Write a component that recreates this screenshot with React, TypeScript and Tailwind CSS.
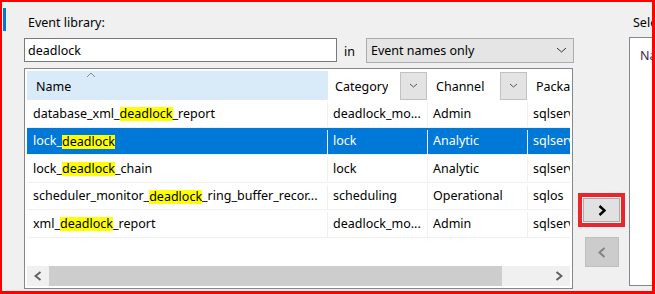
import React from "react";

type Row = {
  pre: string;
  post: string;
  category: string;
  channel: string;
  pkg: string;
  selected?: boolean;
};

const rows: Row[] = [
  { pre: "database_xml_", post: "_report", category: "deadlock_mo...", channel: "Admin", pkg: "sqlserver" },
  { pre: "lock_", post: "", category: "lock", channel: "Analytic", pkg: "sqlserver", selected: true },
  { pre: "lock_", post: "_chain", category: "lock", channel: "Analytic", pkg: "sqlserver" },
  { pre: "scheduler_monitor_", post: "_ring_buffer_recor...", category: "scheduling", channel: "Operational", pkg: "sqlos" },
  { pre: "xml_", post: "_report", category: "deadlock_mo...", channel: "Admin", pkg: "sqlserver" },
];

const Chevron = ({
  dir,
  className,
  w = 8,
  h = 10,
  sw = 1.6,
}: {
  dir: "left" | "right" | "down" | "up";
  className?: string;
  w?: number;
  h?: number;
  sw?: number;
}) => {
  const pts =
    dir === "left"
      ? `${w - 1.5},1 1.5,${h / 2} ${w - 1.5},${h - 1}`
      : dir === "right"
      ? `1.5,1 ${w - 1.5},${h / 2} 1.5,${h - 1}`
      : dir === "down"
      ? `1,1 ${w / 2},${h - 1} ${w - 1},1`
      : `1,${h - 1} ${w / 2},1 ${w - 1},${h - 1}`;
  return (
    <svg width={w} height={h} viewBox={`0 0 ${w} ${h}`} className={className}>
      <polyline points={pts} fill="none" stroke="currentColor" strokeWidth={sw} />
    </svg>
  );
};

const HeaderCell = ({ label, pl }: { label: string; pl: string }) => (
  <div className={`w-[100px] shrink-0 h-full flex items-center ${pl}`}>
    <span className="truncate pt-[3px]">{label}</span>
    <div className="ml-auto mr-[1px] w-[27px] h-[28px] bg-[#e3e3e3] border border-[#c2c2c2] flex items-center justify-center text-[#555]">
      <Chevron dir="down" w={9} h={5} sw={1} />
    </div>
  </div>
);

const App = () => {
  return (
    <div
      className="w-[655px] h-[294px] overflow-hidden bg-[#f0f0f0] border-t-2 border-l-2 border-r-[3px] border-b-[3px] border-[#ff0000] flex text-[12.5px] text-black"
      style={{ fontFamily: '"Noto Sans", "Open Sans", sans-serif' }}
    >
      {/* side tab marker */}
      <div className="w-[22px] shrink-0 pt-[6px] pl-[1px]">
        <div className="w-[3px] h-[23px] bg-[#0078d7]" />
      </div>

      {/* event library */}
      <div className="w-[550px] shrink-0 flex flex-col pt-[11px]">
        <div className="pl-[4px] h-[16px] leading-[16px] pt-[2px]">Event library:</div>
        <div className="mt-[9px] flex items-center h-[24px]">
          <div className="w-[313px] h-[24px] border border-[#7a7a7a] bg-white flex items-center pl-[3px] pt-[2px]">
            deadlock
          </div>
          <div className="w-[29px] pl-[7px] pt-[4px]">in</div>
          <div className="w-[208px] h-[25px] border border-[#acacac] bg-[#e5e5e5] flex items-center pl-[4px] pr-[6px]">
            <span className="pt-[2px]">Event names only</span>
            <Chevron dir="down" w={11} h={6} sw={1} className="ml-auto text-[#333]" />
          </div>
        </div>

        <div className="mt-[6px] w-[549px] h-[221px] border border-[#828790] bg-white p-[2px] flex flex-col">
          <div className="flex-1 overflow-hidden flex flex-col">
            {/* header */}
            <div className="flex h-[29px] shrink-0">
              <div className="w-[301px] shrink-0 h-full bg-[#d9ebf9] relative flex items-center pl-[9px]">
                <span className="pt-[3px]">Name</span>
                <Chevron dir="up" w={10} h={6} sw={1} className="absolute top-[1px] left-[59px] text-[#8a8a8a]" />
              </div>
              <HeaderCell label="Category" pl="pl-[7px]" />
              <HeaderCell label="Channel" pl="pl-[8px]" />
              <div className="w-[100px] shrink-0 h-full flex items-center pl-[8px]">
                <span className="pt-[3px] whitespace-nowrap">Package</span>
              </div>
            </div>

            {/* rows */}
            {rows.map((r, i) => (
              <div
                key={i}
                className={`flex h-[27.5px] shrink-0 border-b border-[#f0f0f0] pt-[2px] ${
                  r.selected ? "bg-[#0078d7] text-white" : ""
                }`}
              >
                <div className="w-[301px] shrink-0 flex items-center pl-[6px] border-r border-[#f0f0f0] whitespace-nowrap">
                  <span>{r.pre}</span>
                  <span className="inline-block h-[14px] leading-[14px] bg-[#ffff00] text-black">deadlock</span>
                  <span>{r.post}</span>
                </div>
                <div className="w-[100px] shrink-0 flex items-center pl-[5px] border-r border-[#f0f0f0] whitespace-nowrap">
                  {r.category}
                </div>
                <div className="w-[100px] shrink-0 flex items-center pl-[5px] border-r border-[#f0f0f0] whitespace-nowrap">
                  {r.channel}
                </div>
                <div className="w-[100px] shrink-0 flex items-center pl-[5px] whitespace-nowrap">{r.pkg}</div>
              </div>
            ))}

            <div className="flex-1" />

            {/* horizontal scrollbar */}
            <div className="h-[20px] shrink-0 flex bg-[#f0f0f0]">
              <div className="w-[22px] flex items-center justify-center text-[#606060]">
                <Chevron dir="left" w={8} h={10} sw={2} />
              </div>
              <div className="w-[453px] bg-[#cdcdcd]" />
              <div className="flex-1 flex items-center justify-end pr-[7px] text-[#606060]">
                <Chevron dir="right" w={8} h={10} sw={2} />
              </div>
            </div>
          </div>
        </div>
      </div>

      {/* add / remove buttons */}
      <div className="w-[55px] shrink-0 flex flex-col items-center pt-[191px]">
        <div className="w-[47px] h-[34px] border-[4px] border-[#e8262b] p-[1px]">
          <div className="w-full h-full bg-[#e1e1e1] border border-[#adadad] flex items-center justify-center text-black">
            <Chevron dir="right" w={8} h={11} sw={2.4} />
          </div>
        </div>
        <div className="mt-[10px] w-[34px] h-[30px] bg-[#cccccc] border border-[#bfbfbf] flex items-center justify-center text-[#838383]">
          <Chevron dir="left" w={8} h={11} sw={2} />
        </div>
      </div>

      {/* selected events */}
      <div className="flex-1 overflow-hidden flex flex-col pt-[11px]">
        <div className="pl-[4px] h-[16px] leading-[16px] pt-[2px] whitespace-nowrap">Selected events:</div>
        <div className="mt-[8px] w-[200px] h-[249px] border border-[#828790] bg-white pl-[10px] pt-[9px] text-[#3d1f4f] whitespace-nowrap">
          Name
        </div>
      </div>
    </div>
  );
};

export default App;
